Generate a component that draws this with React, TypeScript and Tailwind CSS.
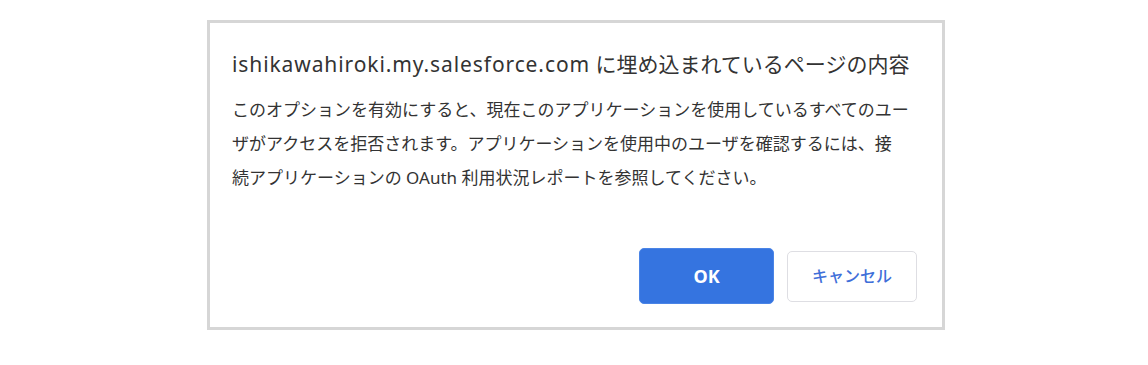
const FONT = { fontFamily: '"Noto Sans", "Noto Sans CJK JP", sans-serif' };

export default function App() {
  return (
    <div className="w-[1148px] h-[365px] bg-white pt-5" style={FONT}>
      {/* Dialog */}
      <div className="ml-[207px] w-[738px] border-[3px] border-[#d6d6d6] bg-white pl-[22px] pr-[25px] pt-[27px] pb-[23px]">
        <h1 className="text-[21px] leading-[28px] text-[#333] whitespace-nowrap">
          <span className="tracking-[0.9px]">ishikawahiroki.my.salesforce.com</span> に埋め込まれているページの内容
        </h1>
        <p className="mt-[15px] text-[17px] leading-[34px] text-[#333] whitespace-nowrap">
          このオプションを有効にすると、現在このアプリケーションを使用しているすべてのユー
          <br />
          ザがアクセスを拒否されます。アプリケーションを使用中のユーザを確認するには、接
          <br />
          続アプリケーションの OAuth 利用状況レポートを参照してください。
        </p>

        {/* Buttons */}
        <div className="mt-[53px] flex items-center justify-end gap-[13px]">
          <button className="w-[135px] h-[56px] rounded-[5px] bg-[#3574e0] border border-[#4a84e6] text-white text-[18px] font-bold">
            OK
          </button>
          <button className="w-[130px] h-[51px] rounded-[5px] bg-white border border-[#dedee3] text-[#3f6fd9] text-[16px] font-medium">
            キャンセル
          </button>
        </div>
      </div>
    </div>
  );
}
